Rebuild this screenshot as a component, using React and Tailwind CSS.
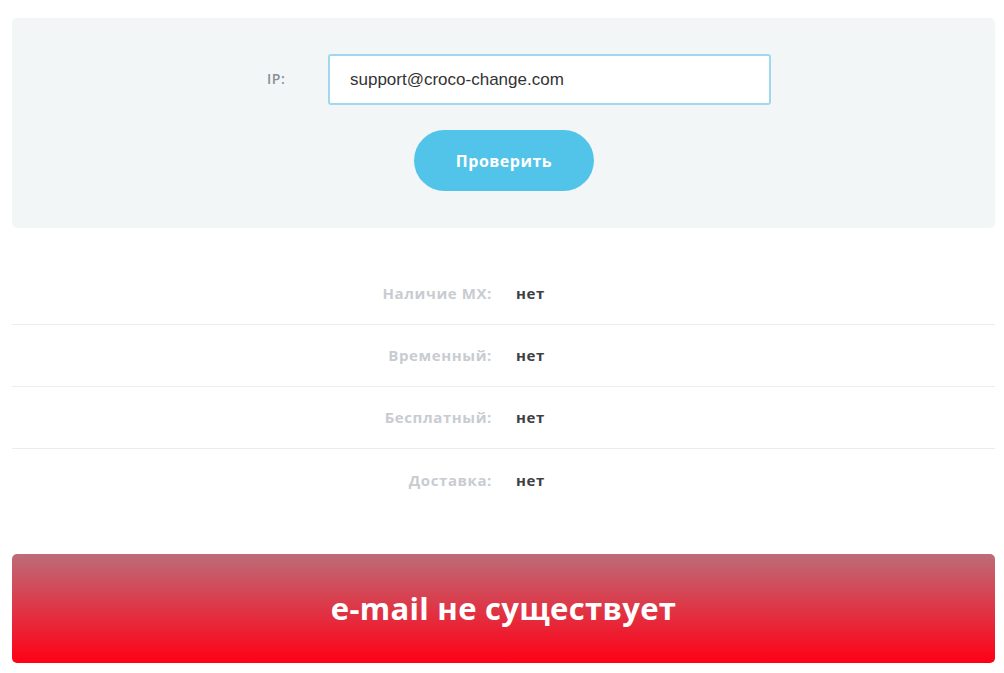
export default function App() {
  const rows = [
    ["Наличие MX:", "нет"],
    ["Временный:", "нет"],
    ["Бесплатный:", "нет"],
    ["Доставка:", "нет"],
  ];

  return (
    <div className="w-[1004px] h-[673px] bg-white pt-[18px] pl-[12px] font-['Open_Sans',sans-serif]">
      <div className="w-[983px]">
        {/* form */}
        <div className="h-[210px] rounded-[5px] bg-[#f3f6f7] pt-[36px] pl-[255px]">
          <div className="flex items-center">
            <label className="w-[61px] text-[14px] font-semibold text-[#8a8f94] tracking-[0.5px] mb-[2px]">
              IP:
            </label>
            <input
              defaultValue="support@croco-change.com"
              className="w-[443px] h-[51px] rounded-[3px] border-[2px] border-[#9fd8ef] bg-white pl-[20px] text-[17px] text-[#333] font-['Liberation_Sans',sans-serif] outline-none"
            />
          </div>
          <button className="mt-[25px] ml-[147px] w-[180px] h-[61px] rounded-full bg-[#52c4ea] text-white text-[16px] font-bold tracking-[0.5px]">
            Проверить
          </button>
        </div>

        {/* results */}
        <div className="mt-[35px]">
          {rows.map(([k, v], i) => (
            <div
              key={i}
              className={
                "flex items-center h-[62px] " +
                (i < rows.length - 1 ? "border-b border-[#ececec]" : "")
              }
            >
              <div className="w-[480px] text-right text-[15px] font-bold tracking-[0.6px] text-[#c8ccd1]">
                {k}
              </div>
              <div className="ml-[24px] text-[15px] font-bold tracking-[0.6px] text-[#3d3f42]">
                {v}
              </div>
            </div>
          ))}
        </div>

        {/* status */}
        <div className="mt-[43px] h-[109px] rounded-[5px] bg-[linear-gradient(to_bottom,#bd6c78,#ff0015)] flex items-center justify-center">
          <span className="text-white text-[31px] font-bold tracking-[0.3px]">
            e-mail не существует
          </span>
        </div>
      </div>
    </div>
  );
}
